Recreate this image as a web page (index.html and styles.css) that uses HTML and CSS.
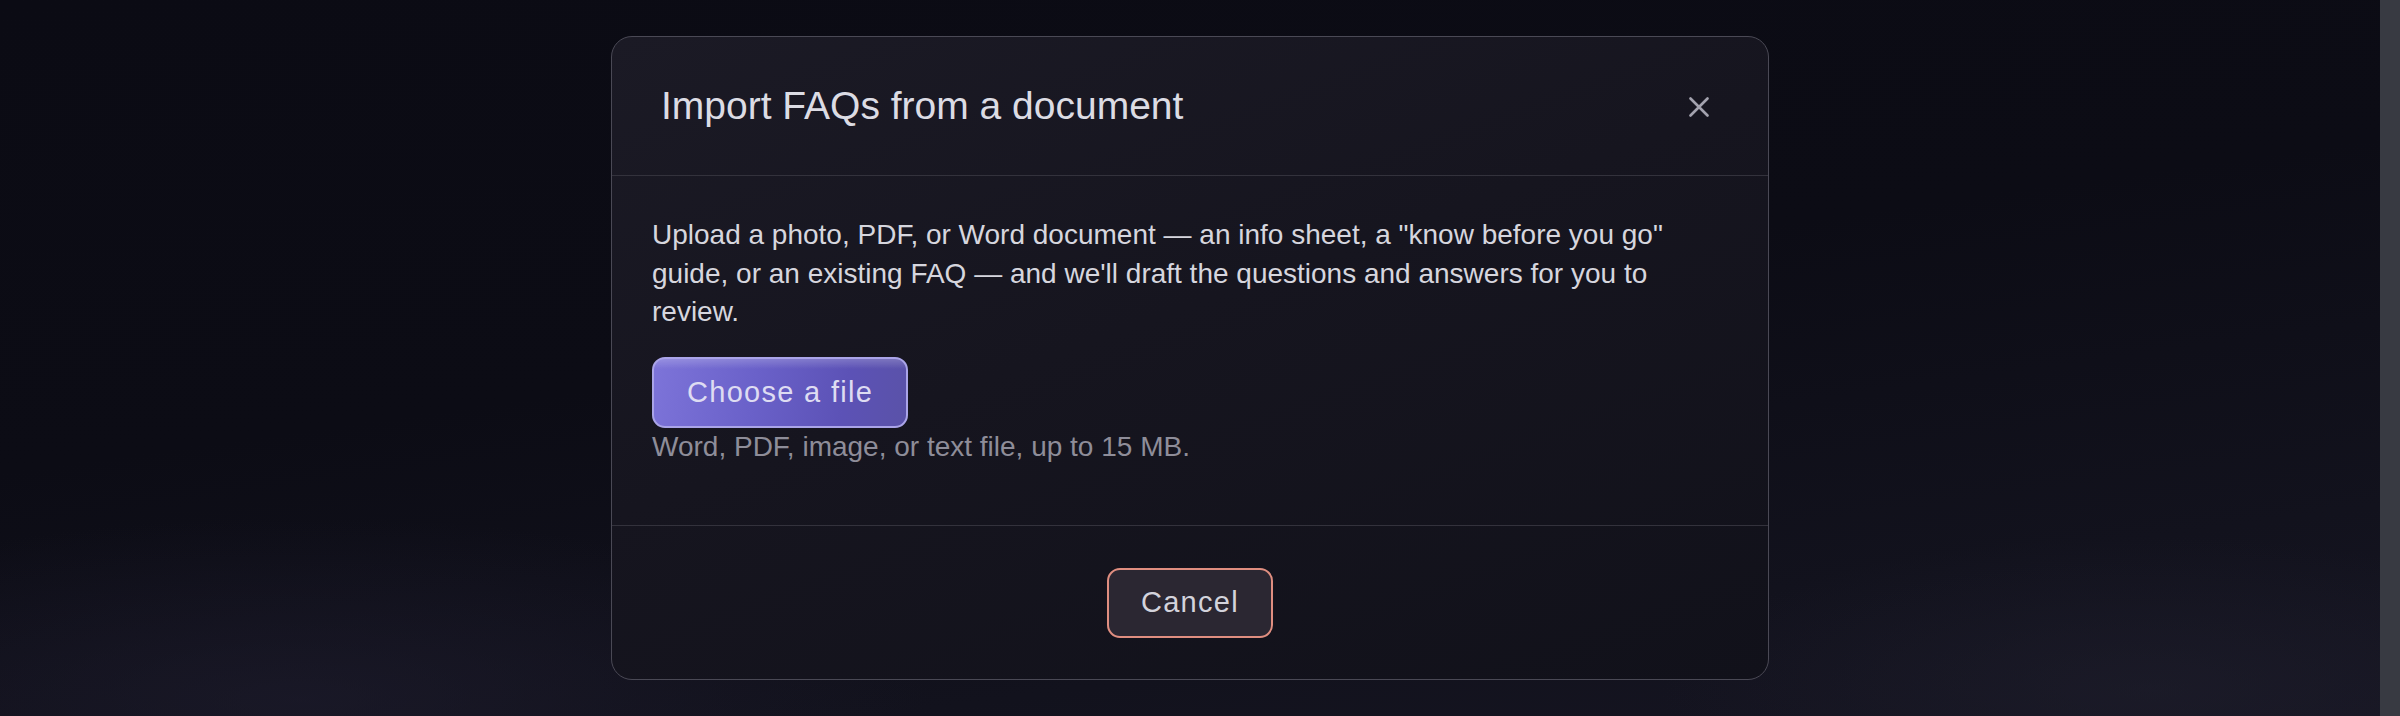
FILE: index.html
```html
<!DOCTYPE html>
<html lang="en">
<head>
    <meta charset="UTF-8">
    <title>Import FAQs from a document</title>
    <link rel="stylesheet" href="styles.css">
</head>
<body>
<div class="page">
    <div class="backdrop">
        <div class="modal">
            <div class="modal-header">
                <h2 class="modal-title">Import FAQs from a document</h2>
                <button class="close-btn" type="button" aria-label="Close">
                    <svg width="20" height="20" viewBox="0 0 20 20">
                        <path d="M1.5 1.5L18.5 18.5M18.5 1.5L1.5 18.5" stroke="#a3a2ae" stroke-width="2.6" stroke-linecap="round" fill="none"/>
                    </svg>
                </button>
            </div>
            <div class="modal-body">
                <p class="intro">Upload a photo, PDF, or Word document &mdash; an info sheet, a "know before you go" guide, or an existing FAQ &mdash; and we'll draft the questions and answers for you to review.</p>
                <button class="btn btn-primary" type="button">Choose a file</button>
                <p class="hint">Word, PDF, image, or text file, up to 15 MB.</p>
            </div>
            <div class="modal-footer">
                <button class="btn btn-cancel" type="button">Cancel</button>
            </div>
        </div>
    </div>
    <div class="scrollbar"></div>
</div>
</body>
</html>
```

FILE: styles.css
```css
*{
    margin: 0;
    padding: 0;
    box-sizing: border-box;
}
html, body{
    height: 100%;
    overflow: hidden;
}
body{
    font-family: "Liberation Sans", Arial, sans-serif;
    background: #0c0c15;
}
.page{
    display: flex;
    height: 716px;
}
.backdrop{
    flex: 1;
    display: flex;
    justify-content: center;
    align-items: flex-start;
    padding-top: 36px;
    background:
        radial-gradient(ellipse 900px 260px at 300px 700px, rgba(32,30,48,0.55), rgba(32,30,48,0) 70%),
        radial-gradient(ellipse 700px 220px at 2150px 690px, rgba(32,32,46,0.5), rgba(32,32,46,0) 70%),
        linear-gradient(172deg, #0b0b14 0%, #0c0c15 45%, #12121d 80%, #161522 100%);
}
.scrollbar{
    width: 20px;
    background: #383a42;
}
.modal{
    width: 1158px;
    border: 1.5px solid #4a4955;
    border-radius: 21px;
    background: linear-gradient(160deg, #1b1a25 0%, #16151f 45%, #11111a 100%);
    overflow: hidden;
}
.modal-header{
    height: 139px;
    display: flex;
    align-items: center;
    justify-content: space-between;
    padding: 0 49px;
    border-bottom: 1.5px solid #33323c;
}
.modal-title{
    font-size: 39px;
    font-weight: normal;
    color: #dcdce4;
}
.close-btn{
    width: 40px;
    height: 40px;
    display: flex;
    align-items: center;
    justify-content: center;
    background: none;
    border: none;
    margin-top: 2px;
}
.modal-body{
    height: 350px;
    padding: 40px 40px 0;
    border-bottom: 1.5px solid #33323c;
}
.intro{
    font-size: 28px;
    line-height: 38.6px;
    color: #d6d6de;
}
.btn{
    font-family: "Liberation Sans", Arial, sans-serif;
    font-size: 29px;
    letter-spacing: 1.3px;
    height: 71px;
    padding: 0 33px;
    border-radius: 13px;
    display: inline-flex;
    align-items: center;
    justify-content: center;
}
.btn-primary{
    margin-top: 25px;
    color: #dedcf2;
    border: 2px solid #aaa4e8;
    background: linear-gradient(180deg, rgba(255,255,255,0.2) 0, rgba(255,255,255,0) 10px),
        linear-gradient(100deg, #7d74d9 0%, #6a61c9 40%, #5c52b6 75%, #5a52a8 100%);
}
.hint{
    font-size: 28px;
    line-height: 38.6px;
    color: #8e8d99;
}
.modal-footer{
    height: 153px;
    display: flex;
    align-items: center;
    justify-content: center;
}
.btn-cancel{
    width: 166px;
    height: 70px;
    padding: 0;
    color: #d3d3dc;
    border: 2px solid #e08e80;
    background: #2b2732;
}
```
